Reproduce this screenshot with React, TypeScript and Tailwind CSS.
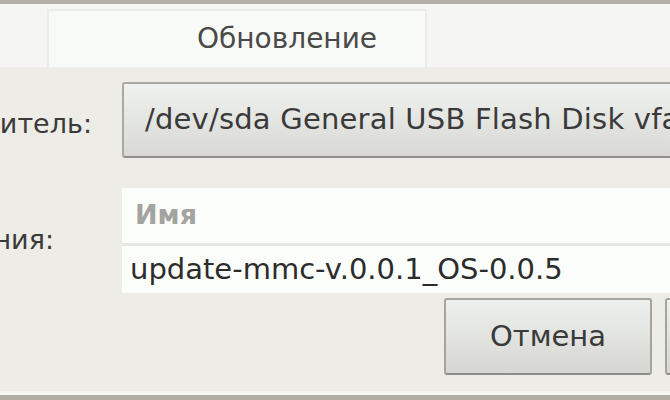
import React from 'react';

const font = { fontFamily: '"DejaVu Sans", "Liberation Sans", sans-serif' };

const App: React.FC = () => {
  return (
    <div
      className="w-[670px] h-[400px] overflow-hidden flex flex-col bg-[#edece6] text-[#3a3a3a]"
      style={font}
    >
      {/* window edge */}
      <div className="h-[4px] bg-[#b2b0a6]" />

      {/* tab strip */}
      <div className="h-[63px] bg-[#f5f6f3] flex items-end pl-[47px]">
        <div className="w-[380px] h-[58px] bg-[#f8faf7] border-2 border-b-0 border-[#eaece8] flex items-center pl-[148px] text-[28px] text-[#4a4a4a]">
          Обновление
        </div>
      </div>

      {/* device row */}
      <div className="flex items-center mt-[15px] h-[76px]">
        <div className="w-[122px] shrink-0 flex justify-end pr-[30px] pt-[8px] text-[27px] whitespace-nowrap">
          Носитель:
        </div>
        <div className="flex-1 -mr-[60px] h-full rounded-[3px] border-2 border-[#a9a8a1] border-b-[#8f8e88] bg-gradient-to-b from-[#f0f2ef] to-[#d8d9d5] flex items-center pl-[21px] text-[29px] tracking-[0.2px] whitespace-nowrap overflow-hidden">
          /dev/sda General USB Flash Disk vfat
        </div>
      </div>

      {/* file row */}
      <div className="flex items-center mt-[30px] h-[105px]">
        <div className="w-[122px] shrink-0 flex justify-end pr-[68px] text-[27px] whitespace-nowrap">
          Файл обновления:
        </div>
        <div className="flex-1 h-full flex flex-col bg-[#fbfdfb]">
          <div className="h-[55px] flex items-center pl-[13px] text-[27px] font-bold text-[#a3a3a0]">
            Имя
          </div>
          <div className="h-[3px] bg-[#e6e7e2]" />
          <div className="flex-1 flex items-center pl-[8px] text-[29px] text-[#2c2c2c] whitespace-nowrap">
            update-mmc-v.0.0.1_OS-0.0.5
          </div>
        </div>
      </div>

      {/* buttons */}
      <div className="flex mt-[5px] h-[77px] pl-[444px] gap-[13px]">
        <div className="w-[208px] shrink-0 rounded-[3px] border-2 border-[#a4a39d] border-b-[#8d8c86] bg-gradient-to-b from-[#eef0ed] to-[#d6d7d3] flex items-center justify-center text-[29px]">
          Отмена
        </div>
        <div className="w-[208px] shrink-0 rounded-[3px] border-2 border-[#a4a39d] border-b-[#8d8c86] bg-gradient-to-b from-[#eef0ed] to-[#d6d7d3]" />
      </div>

      <div className="flex-1" />
      <div className="h-[4px] bg-[#f6f6f3]" />
      <div className="h-[5px] bg-[#b2b0a6]" />
    </div>
  );
};

export default App;
